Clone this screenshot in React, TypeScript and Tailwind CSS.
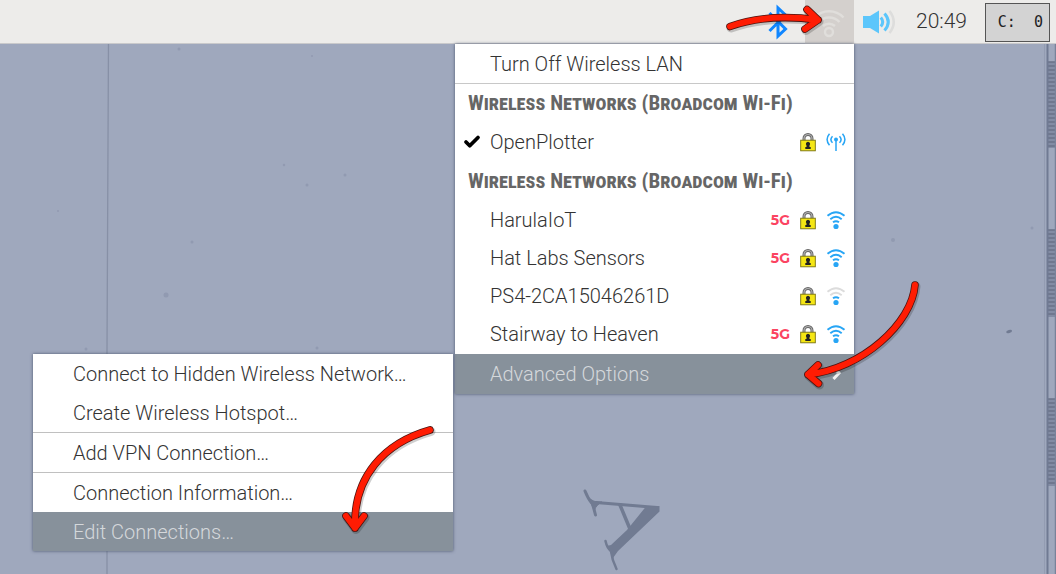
import React from "react";
import { Check } from "lucide-react";

type Signal = "full" | "weak" | "hotspot";

interface Network {
  name: string;
  fast?: boolean;
  signal: Signal;
}

const networks: Network[] = [
  { name: "HarulaIoT", fast: true, signal: "full" },
  { name: "Hat Labs Sensors", fast: true, signal: "full" },
  { name: "PS4-2CA15046261D", signal: "weak" },
  { name: "Stairway to Heaven", fast: true, signal: "full" },
];

function BluetoothIcon() {
  return (
    <svg viewBox="0 0 20 36" className="h-9 w-5" fill="none" stroke="#1086ff" strokeWidth="3" strokeLinejoin="miter">
      <path d="M1.500 9 L17.500 25 L10 32 V4 L17.500 11 L1.500 27" />
    </svg>
  );
}

function PanelWifiIcon() {
  return (
    <svg viewBox="0 0 32 32" className="h-8 w-8" fill="none" stroke="#e0dedb" strokeWidth="2.400">
      <path d="M1.500 11.500 A20 20 0 0 1 30.500 11.500" />
      <path d="M5.500 16 A14.500 14.500 0 0 1 26.500 16" />
      <path d="M10 20 A9 9 0 0 1 22 20" />
      <circle cx="16" cy="26" r="4" />
    </svg>
  );
}

function SpeakerIcon() {
  return (
    <svg viewBox="0 0 34 26" className="h-[26px] w-[34px]" fill="none" strokeWidth="3">
      <path d="M1 7 H8 L17 1.500 V24.500 L8 19 H1 Z" fill="#5cc6fb" />
      <path d="M18.800 8.500 Q22.600 13 18.800 17.500" stroke="#5cc6fb" />
      <path d="M22.500 4.500 Q30 13 22.500 21.500" stroke="#5cc6fb" />
      <path d="M27.500 2 Q36 13 27.500 24" stroke="#dddddc" strokeWidth="2.600" />
    </svg>
  );
}

function LockIcon() {
  return (
    <svg viewBox="0 0 16 19" className="h-[19px] w-4" role="img" aria-label="Secured">
      <path d="M4 8.500 V5.500 A4 4 0 0 1 12 5.500 V8.500" fill="none" stroke="#666" strokeWidth="3" />
      <path d="M4 8 V5.500 A4 4 0 0 1 12 5.500 V8" fill="none" stroke="#b0b0b0" strokeWidth="1.200" />
      <rect x="0.700" y="7.200" width="14.600" height="10.600" fill="#f5e614" stroke="#77700f" strokeWidth="0.900" />
      <path d="M8 8.700 a2.200 2.200 0 0 1 1.500 3.700 V14 H10.700 V16 H5.300 V14 H6.500 V12.400 A2.200 2.200 0 0 1 8 8.700 Z" fill="#222" />
    </svg>
  );
}

function SignalIcon({ signal }: { signal: Signal }) {
  if (signal === "hotspot") {
    return (
      <svg viewBox="0 0 20 20" className="h-5 w-5" fill="none" stroke="#27a5f5" strokeWidth="1.500" role="img" aria-label="Hotspot">
        <path d="M3.500 1.800 Q-1.300 7.500 3.500 13.200 M16.500 1.800 Q21.300 7.500 16.500 13.200" />
        <path d="M6.500 4.200 Q3.300 7.500 6.500 10.800 M13.500 4.200 Q16.700 7.500 13.500 10.800" />
        <path d="M10 8 V19" />
        <circle cx="10" cy="7.500" r="2" fill="#27a5f5" stroke="none" />
      </svg>
    );
  }
  const outer = signal === "full" ? "#27a5f5" : "#dcdcdc";
  return (
    <svg viewBox="0 0 20 20" className="h-5 w-5" fill="none" strokeWidth="1.900" role="img" aria-label={`Signal ${signal}`}>
      <path d="M1.500 5.800 Q10 -1.300 18.500 5.800" stroke={outer} />
      <path d="M4.300 9.200 Q10 4.300 15.700 9.200" stroke={outer} />
      <path d="M7 12.300 Q10 10.200 13 12.300" stroke="#27a5f5" />
      <circle cx="10" cy="16.500" r="2.600" fill="#27a5f5" />
    </svg>
  );
}

function Wallpaper() {
  const bands = [
    [62, 148],
    [230, 317],
    [399, 486],
  ];
  const ticks = bands.flatMap(([from, to]) => {
    const out: number[] = [];
    for (let y = from; y <= to; y += 4) out.push(y);
    return out;
  });
  const specks = [
    [179, 49, 1.5], [312, 56, 1], [284, 165, 1.2], [345, 175, 1.5], [307, 185, 1.5], [58, 211, 1],
    [192, 242, 1.5], [166, 295, 2.5], [86, 349, 1.5], [317, 348, 1.5], [1032, 228, 1.5], [893, 240, 2],
  ];
  return (
    <svg viewBox="0 0 1056 574" preserveAspectRatio="xMaxYMin slice" className="absolute inset-0 h-full w-full" aria-hidden="true">
      <rect width="1056" height="574" fill="#9fa8bd" />
      <path d="M108.500 40 L107 350 V574" stroke="#8790a6" strokeWidth="1.300" fill="none" />
      {specks.map(([x, y, r]) => (
        <circle key={`${x}-${y}`} cx={x} cy={y} r={r} fill="#79829a" opacity="0.350" />
      ))}
      <ellipse cx="1009" cy="331.500" rx="3" ry="1.500" fill="#717b92" transform="rotate(-15 1009 331)" />
      {bands.map(([from, to]) => (
        <rect key={from} x="1048" y={from} width="8" height={to - from} fill="#828ca4" />
      ))}
      {ticks.map((y) => (
        <path key={y} d={`M1048 ${y} H1056`} stroke="#687289" strokeWidth="1.500" />
      ))}
      <path d="M1044.500 40 V574" stroke="#939cb2" strokeWidth="1" />
      <path d="M1047.500 40 V574" stroke="#707a93" strokeWidth="2" />
      <path d="M1055.500 40 V574" stroke="#78829a" strokeWidth="1.500" />
      <g fill="none" stroke="#717b92" strokeLinecap="round" strokeLinejoin="round">
        <path d="M596 502.500 L657 507.500" strokeWidth="3" />
        <path d="M620 505 L630 529" strokeWidth="3.500" />
        <path d="M585 491 Q588 499 592.500 504 Q594 509 595.500 515" strokeWidth="3" />
        <path d="M605.500 541 Q607 548 611 551 Q612 560 616.500 569" strokeWidth="2.500" />
        <path d="M588 497 Q593 503 602 502 Q596 505 594.500 510 Z" fill="#717b92" strokeWidth="1" />
      </g>
      <path d="M646 506.500 L659.500 506 L659.500 511.500 L618 551 L613 558 L609.500 551 L606.500 546 L611 545 L627 530 Z" fill="#717b92" />
    </svg>
  );
}

function PointerArrows() {
  const strokes = [
    "M730 26.500 Q768 13 818 20 M807 9.500 L818 20 L805 29",
    "M915 285 C912 323 862 369 808 374.500 M818 365 L808 374.500 L818.500 383.500",
    "M430 430 C384 443 353 477 355 528 M346 516 L355 528 L364 516",
  ];
  return (
    <svg viewBox="0 0 1056 574" className="pointer-events-none absolute top-0 right-0 z-20 h-[574px] w-[1056px] max-w-none" fill="none" strokeLinecap="round" strokeLinejoin="round" aria-hidden="true">
      {strokes.map((d) => (
        <g key={d}>
          <path d={d} stroke="#00000030" strokeWidth="9" transform="translate(1 1.500)" />
          <path d={d} stroke="#4d1410" strokeWidth="7.600" />
          <path d={d} stroke="#ff1c03" strokeWidth="6" />
        </g>
      ))}
    </svg>
  );
}

function NetworkRow({ network, connected }: { network: Network; connected?: boolean }) {
  return (
    <button type="button" role="menuitem" className="flex h-[38px] w-full items-center pr-2 text-left">
      <span className="flex w-[35px] shrink-0 justify-center">{connected && <Check size={18} strokeWidth={5} color="#000" />}</span>
      <span className="flex-1">{network.name}</span>
      <span className="flex items-center gap-2.5">
        {network.fast && <span className="font-[Montserrat,Inter,sans-serif] text-sm font-bold text-[#fb4461]">5G</span>}
        <LockIcon />
        <SignalIcon signal={network.signal} />
      </span>
    </button>
  );
}

function Heading() {
  return (
    <h2 className="flex h-[39px] items-center pl-[13px] font-['Roboto_Condensed',Roboto,sans-serif] text-[21px] font-bold text-[#666] [font-variant-caps:small-caps]">
      Wireless Networks (Broadcom Wi-Fi)
    </h2>
  );
}

function SubItem({ children, active }: { children: React.ReactNode; active?: boolean }) {
  return (
    <button
      type="button"
      role="menuitem"
      className={active ? "flex h-[39px] w-full items-center bg-[#87919b] pl-10 text-[#d5d8db]" : "flex h-[39px] w-full items-center pl-10"}
    >
      {children}
    </button>
  );
}

export default function App() {
  return (
    <div className="relative flex min-h-screen flex-col overflow-hidden font-[Roboto,sans-serif] text-[#333]">
      <Wallpaper />
      <header className="relative z-10 flex h-11 items-center justify-end bg-[#edecea] pr-1.5 shadow-[inset_0_-1px_0_#c9c9cb]">
        <button type="button" aria-label="Bluetooth" className="mr-[17px]">
          <BluetoothIcon />
        </button>
        <div className="relative h-full w-[49px]">
          <button type="button" aria-label="Wireless networks" aria-expanded="true" className="flex h-full w-full items-center justify-center bg-[#d4d0cd]">
            <PanelWifiIcon />
          </button>
          <div role="menu" className="absolute top-full right-0 w-[399px] bg-white text-xl font-light shadow-[0_0_3px_#4b556c]">
            <button type="button" role="menuitem" className="flex h-[39px] w-full items-center pl-[35px]">
              Turn Off Wireless LAN
            </button>
            <div className="h-px bg-[#c8c8c8]" role="separator" />
            <section className="pb-px">
              <Heading />
              <NetworkRow network={{ name: "OpenPlotter", signal: "hotspot" }} connected />
            </section>
            <section className="pb-px">
              <Heading />
              {networks.map((network) => (
                <NetworkRow key={network.name} network={network} />
              ))}
            </section>
            <div className="relative">
              <button type="button" role="menuitem" aria-expanded="true" className="flex h-10 w-full items-center justify-between bg-[#87919b] pr-3 pl-[35px] text-[#d5d8db]">
                Advanced Options
                <svg viewBox="0 0 10 14" className="h-3.5 w-2.5" fill="none" stroke="#f2f2f2" strokeWidth="3">
                  <path d="M2 1 L7 6 L1.500 12" />
                </svg>
              </button>
              <div role="menu" className="absolute top-0 right-full mr-0.5 w-[420px] bg-white shadow-[0_0_3px_#4b556c]">
                <SubItem>Connect to Hidden Wireless Network…</SubItem>
                <SubItem>Create Wireless Hotspot…</SubItem>
                <div className="h-px bg-[#c0c0c0]" role="separator" />
                <SubItem>Add VPN Connection…</SubItem>
                <div className="h-px bg-[#c0c0c0]" role="separator" />
                <SubItem>Connection Information…</SubItem>
                <SubItem active>Edit Connections…</SubItem>
              </div>
            </div>
          </div>
        </div>
        <button type="button" aria-label="Volume" className="ml-2">
          <SpeakerIcon />
        </button>
        <time className="ml-5 text-[21px] font-light">20:49</time>
        <div className="ml-[18px] flex h-[39px] w-[65px] items-center justify-end border border-[#555] bg-[#d3d3d3] pr-1.5 font-['DejaVu_Sans_Mono',monospace] text-[15px] whitespace-pre text-[#222]">
          C:  0
        </div>
      </header>
      <PointerArrows />
    </div>
  );
}
